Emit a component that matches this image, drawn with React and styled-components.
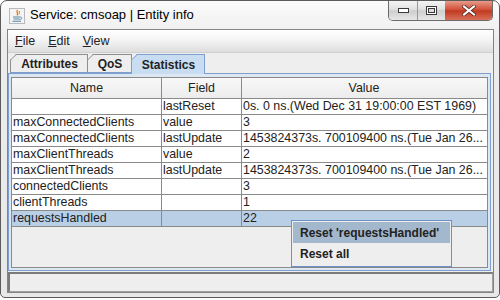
import React from 'react';
import styled, { createGlobalStyle } from 'styled-components';

const Global = createGlobalStyle`
    html, body {
        margin: 0;
        padding: 0;
        background: #ffffff;
    }
    body {
        width: 500px;
        height: 300px;
        overflow: hidden;
        font-family: "Liberation Sans", Arial, sans-serif;
    }
`;

const rows = [
    { name: '', field: 'lastReset', value: '0s. 0 ns.(Wed Dec 31 19:00:00 EST 1969)' },
    { name: 'maxConnectedClients', field: 'value', value: '3' },
    { name: 'maxConnectedClients', field: 'lastUpdate', value: '1453824373s. 700109400 ns.(Tue Jan 26...' },
    { name: 'maxClientThreads', field: 'value', value: '2' },
    { name: 'maxClientThreads', field: 'lastUpdate', value: '1453824373s. 700109400 ns.(Tue Jan 26...' },
    { name: 'connectedClients', field: '', value: '3' },
    { name: 'clientThreads', field: '', value: '1' },
    { name: 'requestsHandled', field: '', value: '22', selected: true },
];

const JavaIcon = () => (
    <svg width="16" height="16" viewBox="0 0 16 16">
        <rect x="0.5" y="0.5" width="15" height="15" fill="#f4f4f4" stroke="#b9b9b9" />
        <path d="M8.5 2 C6.5 4 10 5 8 7.5" stroke="#e76f00" strokeWidth="1.2" fill="none" />
        <path d="M10.5 3 C9.5 4.5 11 5 10 6.5" stroke="#e76f00" strokeWidth="1" fill="none" />
        <path d="M4 9 H11 M4.5 11 H10.5 M3.5 13.2 H12" stroke="#5382a1" strokeWidth="1.1" />
        <path d="M11 9 C13.5 9 13.5 11.5 10.5 11.5" stroke="#5382a1" strokeWidth="0.9" fill="none" />
    </svg>
);

const App = () => {
    return (
        <>
            <Global />
            <Window>
                <TitleBar>
                    <IconBox><JavaIcon /></IconBox>
                    <Title>Service: cmsoap | Entity info</Title>
                    <Controls>
                        <CtrlButton w={28}>
                            <svg width="11" height="5" viewBox="0 0 11 5">
                                <rect x="0.5" y="0.5" width="10" height="4" fill="#fff" stroke="#3a3a3a" />
                            </svg>
                        </CtrlButton>
                        <CtrlButton w={27}>
                            <svg width="11" height="9" viewBox="0 0 11 9">
                                <rect x="0.5" y="0.5" width="10" height="8" fill="#fff" stroke="#3a3a3a" />
                                <rect x="2.5" y="2.5" width="6" height="4" fill="#dcdcdc" stroke="#3a3a3a" />
                            </svg>
                        </CtrlButton>
                        <CtrlButton w={47} close>
                            <svg width="14" height="11" viewBox="0 0 14 11">
                                <path d="M2 1.5 L12 9.5 M12 1.5 L2 9.5" stroke="#5a2a24" strokeWidth="3.6" strokeLinecap="square" />
                                <path d="M2 1.5 L12 9.5 M12 1.5 L2 9.5" stroke="#ffffff" strokeWidth="2" strokeLinecap="square" />
                            </svg>
                        </CtrlButton>
                    </Controls>
                </TitleBar>
                <Body>
                    <MenuBar>
                        <MenuItem><u>F</u>ile</MenuItem>
                        <MenuItem><u>E</u>dit</MenuItem>
                        <MenuItem><u>V</u>iew</MenuItem>
                    </MenuBar>
                    <TabRow>
                        <Tab w={78}>Attributes</Tab>
                        <Tab w={45}>QoS</Tab>
                        <Tab w={74} active>Statistics</Tab>
                    </TabRow>
                    <TabPanel>
                        <ScrollPane>
                            <HeaderRow>
                                <HeadCell>Name</HeadCell>
                                <HeadCell>Field</HeadCell>
                                <HeadCell last>Value</HeadCell>
                            </HeaderRow>
                            {rows.map((r, idx) => (
                                <Row key={idx} selected={r.selected}>
                                    <Cell>{r.name}</Cell>
                                    <Cell>{r.field}</Cell>
                                    <Cell last>{r.value}</Cell>
                                </Row>
                            ))}
                        </ScrollPane>
                        <PopupMenu>
                            <PopupItem active>Reset 'requestsHandled'</PopupItem>
                            <PopupItem>Reset all</PopupItem>
                        </PopupMenu>
                    </TabPanel>
                    <StatusBar />
                </Body>
            </Window>
        </>
    );
};

const Window = styled.div`
    box-sizing: border-box;
    width: 500px;
    height: 298px;
    border: 1px solid #5b5b5b;
    border-radius: 7px 7px 5px 5px;
    background: linear-gradient(#fbfbfb, #ececec 40px, #e8e8e8);
    display: flex;
    flex-direction: column;
    overflow: hidden;
`;

const TitleBar = styled.div`
    height: 28px;
    display: flex;
    align-items: flex-start;
    flex-shrink: 0;
`;

const IconBox = styled.div`
    margin: 7px 0 0 8px;
    width: 16px;
    height: 16px;
`;

const Title = styled.div`
    margin: 6px 0 0 5px;
    font-family: "Liberation Sans", Arial, sans-serif;
    font-size: 13px;
    line-height: 16px;
    color: #000;
    flex: 1;
`;

const Controls = styled.div`
    display: flex;
    margin-right: 6px;
    margin-top: -1px;
    border: 1px solid #6a6a6a;
    border-top: none;
    border-radius: 0 0 5px 5px;
    overflow: hidden;
`;

const CtrlButton = styled.div`
    width: ${(p) => p.w}px;
    height: 20px;
    display: flex;
    align-items: center;
    justify-content: center;
    border-left: ${(p) => (p.close ? 'none' : '1px solid #9a9a9a')};
    &:first-child {
        border-left: none;
    }
    background: ${(p) =>
        p.close
            ? 'linear-gradient(#e8a493, #d4563f 45%, #c23a22 55%, #d8705a)'
            : 'linear-gradient(#f6f6f6, #e2e2e2 45%, #cfcfcf 55%, #e6e6e6)'};
`;

const Body = styled.div`
    flex: 1;
    margin: 0 5px 4px 6px;
    border: 1px solid #848484;
    background: #eeeeee;
    display: flex;
    flex-direction: column;
    min-height: 0;
`;

const MenuBar = styled.div`
    height: 22px;
    flex-shrink: 0;
    display: flex;
    align-items: center;
    padding-left: 6px;
    gap: 11px;
    background: linear-gradient(#ffffff, #f3f3f3 50%, #dddddd);
    border-bottom: 1px solid #cfcfcf;
`;

const MenuItem = styled.div`
    font-family: "Liberation Sans", Arial, sans-serif;
    font-size: 12.5px;
    color: #222;
    padding: 0 1px;
    u {
        text-decoration: underline;
        text-underline-offset: 1px;
    }
`;

const TabRow = styled.div`
    height: 20px;
    flex-shrink: 0;
    display: flex;
    align-items: flex-end;
    padding-left: 2px;
    position: relative;
    z-index: 1;
`;

const Tab = styled.div`
    position: relative;
    box-sizing: border-box;
    width: ${(p) => p.w}px;
    height: ${(p) => (p.active ? '20px' : '19px')};
    margin-bottom: ${(p) => (p.active ? '-1px' : '0')};
    display: flex;
    align-items: center;
    justify-content: center;
    padding-left: 1px;
    font-family: "Liberation Sans", Arial, sans-serif;
    font-weight: bold;
    font-size: 12px;
    color: #222;
    background: ${(p) => (p.active ? '#c8ddf2' : '#eeeeee')};
    border: 1px solid ${(p) => (p.active ? '#7f9fd0' : '#8e8e8e')};
    border-bottom: ${(p) => (p.active ? 'none' : '1px solid #7f9fd0')};
    margin-right: -1px;
    clip-path: polygon(6px 0, 100% 0, 100% 100%, 0 100%, 0 6px);
    &::before {
        content: '';
        position: absolute;
        left: -1px;
        top: 5px;
        width: 9px;
        height: 1px;
        background: ${(p) => (p.active ? '#7f9fd0' : '#8e8e8e')};
        transform-origin: left center;
        transform: rotate(-45deg);
    }
`;

const TabPanel = styled.div`
    position: relative;
    height: 198px;
    box-sizing: border-box;
    margin-right: 2px;
    border: 1px solid #7f9fd0;
    padding: 3px 2px 2px 2px;
    background: #dde7f2;
    flex-shrink: 0;
`;

const ScrollPane = styled.div`
    box-sizing: border-box;
    height: 100%;
    border: 1px solid #8a8a8a;
    background: #eeeeee;
    overflow: hidden;
`;

const HeaderRow = styled.div`
    display: grid;
    grid-template-columns: 150px 80px 244px;
    height: 21px;
    box-sizing: border-box;
    border-bottom: 1px solid #8a8a8a;
    background: linear-gradient(#f8f8f8, #ececec);
`;

const HeadCell = styled.div`
    border-right: ${(p) => (p.last ? 'none' : '1px solid #8a8a8a')};
    font-size: 12.4px;
    line-height: 20px;
    text-align: center;
    color: #222;
`;

const Row = styled.div`
    display: grid;
    grid-template-columns: 150px 80px 244px;
    height: 16px;
    box-sizing: border-box;
    border-bottom: 1px solid #8a8a8a;
    background: ${(p) => (p.selected ? '#b8cfe5' : '#ffffff')};
`;

const Cell = styled.div`
    border-right: ${(p) => (p.last ? 'none' : '1px solid #8a8a8a')};
    font-size: 12.4px;
    line-height: 15px;
    padding-left: 1px;
    color: #222;
    white-space: nowrap;
    overflow: hidden;
`;

const PopupMenu = styled.div`
    position: absolute;
    left: 282px;
    top: 146px;
    width: 161px;
    height: 47px;
    box-sizing: border-box;
    border: 1px solid #6f8fc8;
    background: #eeeeee;
    padding: 1px;
    display: flex;
    flex-direction: column;
`;

const PopupItem = styled.div`
    height: 21px;
    display: flex;
    align-items: center;
    padding-left: 7px;
    font-weight: bold;
    font-size: 12px;
    color: #222;
    background: ${(p) => (p.active ? '#a3b8cc' : 'transparent')};
`;

const StatusBar = styled.div`
    margin-top: 1px;
    height: 20px;
    box-sizing: border-box;
    border: 1px solid #a0a0a0;
    border-top: 2px solid #7a7a7a;
    border-left: 2px solid #7a7a7a;
    background: #eeeeee;
    flex-shrink: 0;
`;

export default App;
